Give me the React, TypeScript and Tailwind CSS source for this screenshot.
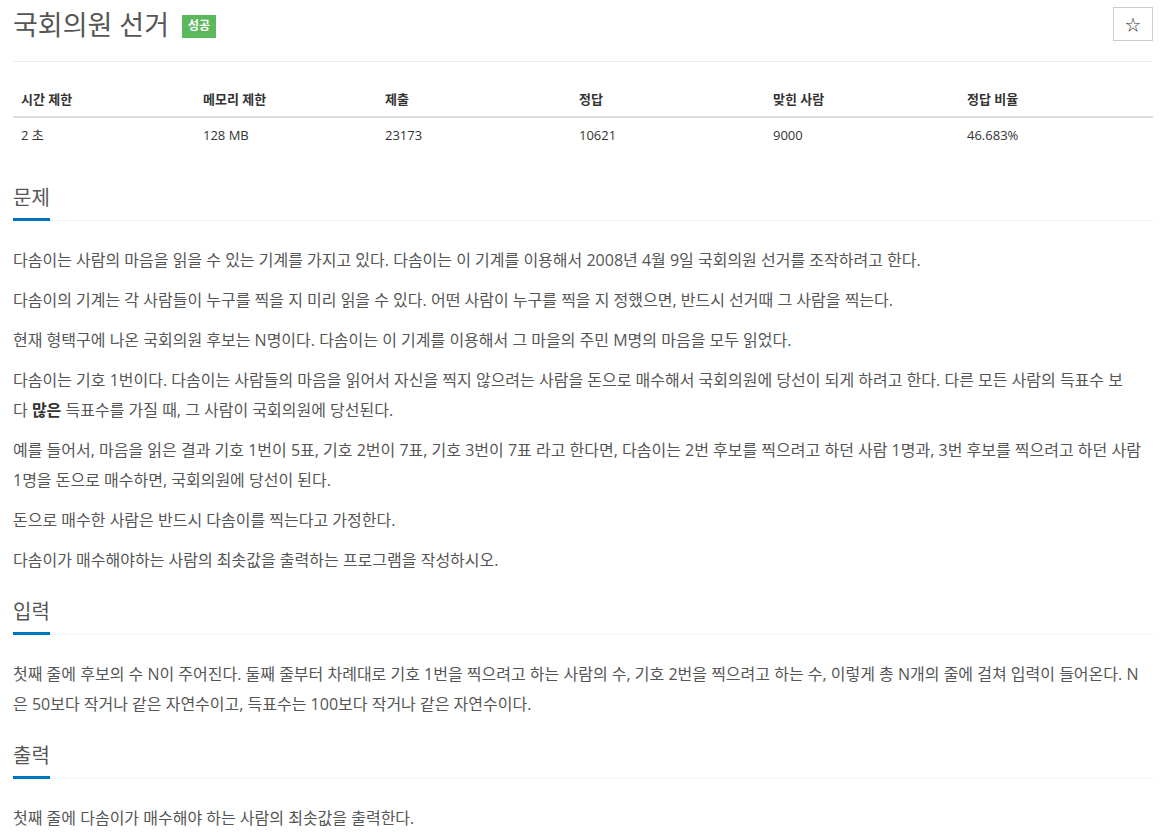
import React from 'react';

const font = "font-['Open_Sans','Noto_Sans_CJK_KR',sans-serif]";

const stats = [
  { label: '시간 제한', value: '2 초' },
  { label: '메모리 제한', value: '128 MB' },
  { label: '제출', value: '23173' },
  { label: '정답', value: '10621' },
  { label: '맞힌 사람', value: '9000' },
  { label: '정답 비율', value: '46.683%' },
];

const Headline: React.FC<{ title: string }> = ({ title }) => (
  <div className="mt-[26px] flex border-b border-dotted border-[#e4e9f0]">
    <h2 className="-mb-px border-b-[3px] border-[#0076c0] pb-[9px] text-[20px] leading-[22px] text-[#555]">
      {title}
    </h2>
  </div>
);

const Section: React.FC<{ title: string; children: React.ReactNode }> = ({ title, children }) => (
  <section>
    <Headline title={title} />
    <div className="mt-[24px] break-all text-[16px] leading-[30px] text-[#555]">{children}</div>
  </section>
);

const P: React.FC<{ children: React.ReactNode }> = ({ children }) => <p className="mb-[10px]">{children}</p>;

export default function App() {
  return (
    <div className={`${font} min-h-screen bg-white pl-[13px] pr-[9px] text-[#555]`}>
      {/* title */}
      <div className="flex items-start justify-between pt-[7px]">
        <div className="flex items-center gap-[13px] pt-[3px]">
          <h1 className="text-[27px] leading-[30px] text-[#555]">국회의원 선거</h1>
          <span className="mt-[2px] flex h-[23px] w-[34px] items-center justify-center bg-[#5cb85c] text-[12px] font-bold text-white">
            성공
          </span>
        </div>
        <button className="flex h-[34px] w-[40px] items-center justify-center border border-[#ccc] bg-white text-[15px] text-[#333]">
          ☆
        </button>
      </div>
      <div className="mt-[20px] border-t border-[#eee]" />

      {/* stats table */}
      <div className="mt-[20px] text-[13px] text-[#333]">
        <div className="grid grid-cols-[182px_182px_194px_194px_194px_194px] border-b-2 border-[#ddd]">
          {stats.map((s) => (
            <div key={s.label} className="px-[8px] py-[8px] font-bold leading-[18px]">
              {s.label}
            </div>
          ))}
        </div>
        <div className="grid grid-cols-[182px_182px_194px_194px_194px_194px]">
          {stats.map((s) => (
            <div key={s.label} className="px-[8px] py-[8px] leading-[18px]">
              {s.value}
            </div>
          ))}
        </div>
      </div>

      <div className="pt-[9px]">
        <Section title="문제">
          <P>다솜이는 사람의 마음을 읽을 수 있는 기계를 가지고 있다. 다솜이는 이 기계를 이용해서 2008년 4월 9일 국회의원 선거를 조작하려고 한다.</P>
          <P>다솜이의 기계는 각 사람들이 누구를 찍을 지 미리 읽을 수 있다. 어떤 사람이 누구를 찍을 지 정했으면, 반드시 선거때 그 사람을 찍는다.</P>
          <P>현재 형택구에 나온 국회의원 후보는 N명이다. 다솜이는 이 기계를 이용해서 그 마을의 주민 M명의 마음을 모두 읽었다.</P>
          <P>
            다솜이는 기호 1번이다. 다솜이는 사람들의 마음을 읽어서 자신을 찍지 않으려는 사람을 돈으로 매수해서 국회의원에 당선이 되게 하려고 한다. 다른 모든 사람의 득표수 보
            <br />
            다 <strong className="font-bold text-[#333]">많은</strong> 득표수를 가질 때, 그 사람이 국회의원에 당선된다.
          </P>
          <P>예를 들어서, 마음을 읽은 결과 기호 1번이 5표, 기호 2번이 7표, 기호 3번이 7표 라고 한다면, 다솜이는 2번 후보를 찍으려고 하던 사람 1명과, 3번 후보를 찍으려고 하던 사람 1명을 돈으로 매수하면, 국회의원에 당선이 된다.</P>
          <P>돈으로 매수한 사람은 반드시 다솜이를 찍는다고 가정한다.</P>
          <P>다솜이가 매수해야하는 사람의 최솟값을 출력하는 프로그램을 작성하시오.</P>
        </Section>
        <Section title="입력">
          <P>첫째 줄에 후보의 수 N이 주어진다. 둘째 줄부터 차례대로 기호 1번을 찍으려고 하는 사람의 수, 기호 2번을 찍으려고 하는 수, 이렇게 총 N개의 줄에 걸쳐 입력이 들어온다. N은 50보다 작거나 같은 자연수이고, 득표수는 100보다 작거나 같은 자연수이다.</P>
        </Section>
        <Section title="출력">
          <P>첫째 줄에 다솜이가 매수해야 하는 사람의 최솟값을 출력한다.</P>
        </Section>
      </div>
    </div>
  );
}
